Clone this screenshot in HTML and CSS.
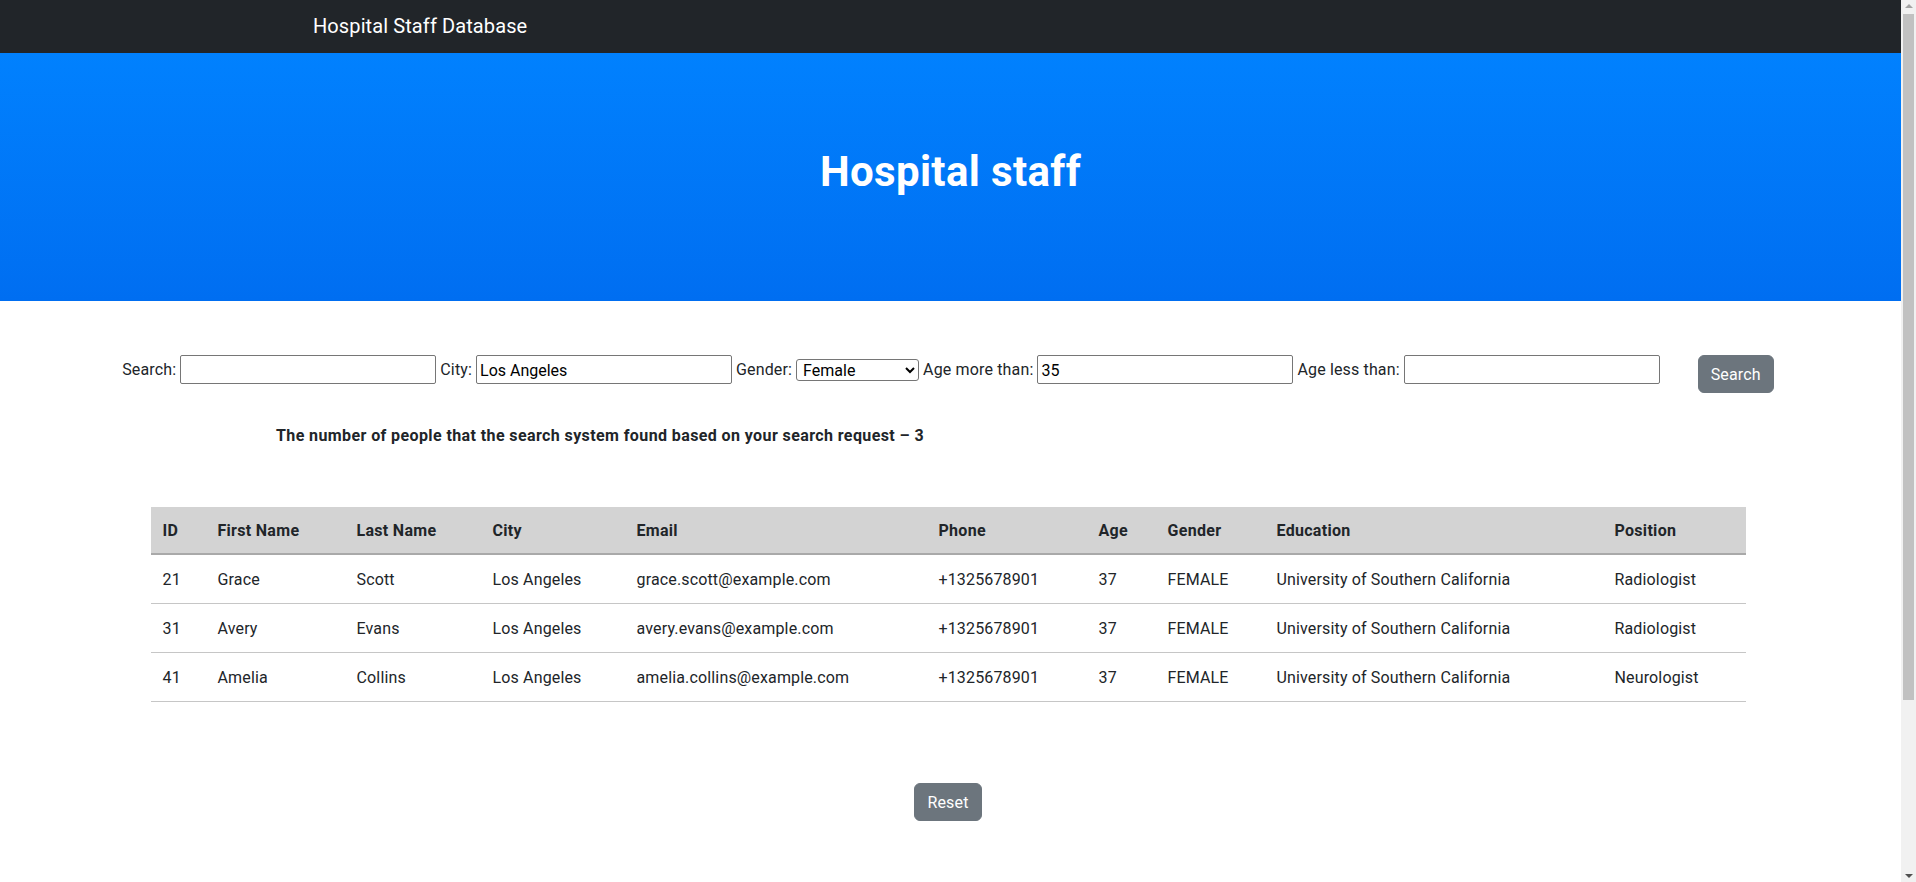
FILE: index.html
```html
<!DOCTYPE html>
<html lang="en">
<head>
<meta charset="utf-8">
<title>Hospital Staff Database</title>
<link rel="stylesheet" href="styles.css">
</head>
<body>
<div class="page">
  <nav class="navbar">
    <div class="nav-container">
      <span class="brand">Hospital Staff Database</span>
    </div>
  </nav>
  <header class="hero">
    <h1 class="hero-title">Hospital staff</h1>
  </header>
  <main class="content">
    <form class="search-form">
      <div class="fields">
        <label class="field-label" for="q">Search:</label>
        <input class="field-input" id="q" type="text" value="">
        <label class="field-label" for="city">City:</label>
        <input class="field-input" id="city" type="text" value="Los Angeles">
        <label class="field-label" for="gender">Gender:</label>
        <select class="field-select" id="gender">
          <option>Female</option>
          <option>Male</option>
        </select>
        <label class="field-label" for="agemin">Age more than:</label>
        <input class="field-input" id="agemin" type="text" value="35">
        <label class="field-label" for="agemax">Age less than:</label>
        <input class="field-input" id="agemax" type="text" value="">
      </div>
      <button class="btn" type="button">Search</button>
    </form>
    <p class="found">The number of people that the search system found based on your search request – 3</p>
    <table class="staff-table">
      <thead>
        <tr>
          <th class="c-id">ID</th>
          <th class="c-first">First Name</th>
          <th class="c-last">Last Name</th>
          <th class="c-city">City</th>
          <th class="c-email">Email</th>
          <th class="c-phone">Phone</th>
          <th class="c-age">Age</th>
          <th class="c-gender">Gender</th>
          <th class="c-edu">Education</th>
          <th class="c-pos">Position</th>
        </tr>
      </thead>
      <tbody>
        <tr>
          <td>21</td><td>Grace</td><td>Scott</td><td>Los Angeles</td><td>grace.scott@example.com</td><td>+1325678901</td><td>37</td><td>FEMALE</td><td>University of Southern California</td><td>Radiologist</td>
        </tr>
        <tr>
          <td>31</td><td>Avery</td><td>Evans</td><td>Los Angeles</td><td>avery.evans@example.com</td><td>+1325678901</td><td>37</td><td>FEMALE</td><td>University of Southern California</td><td>Radiologist</td>
        </tr>
        <tr>
          <td>41</td><td>Amelia</td><td>Collins</td><td>Los Angeles</td><td>amelia.collins@example.com</td><td>+1325678901</td><td>37</td><td>FEMALE</td><td>University of Southern California</td><td>Neurologist</td>
        </tr>
      </tbody>
    </table>
    <div class="reset-row">
      <button class="btn" type="button">Reset</button>
    </div>
  </main>
</div>
<div class="scrollbar" aria-hidden="true">
  <span class="sb-arrow sb-up"></span>
  <span class="sb-thumb"></span>
  <span class="sb-arrow sb-down"></span>
</div>
</body>
</html>
```

FILE: styles.css
```css
* {
  box-sizing: border-box;
}

html, body {
  margin: 0;
  padding: 0;
}

body {
  font-family: Roboto, "Liberation Sans", sans-serif;
  font-size: 16px;
  line-height: 1.5;
  color: #212529;
  background: #fff;
  letter-spacing: 0.15px;
  padding-right: 15px;
}

.page {
  width: 100%;
}

.navbar {
  background: #212529;
  height: 53px;
  display: flex;
  align-items: center;
}

.nav-container {
  width: 1275px;
  margin: 0 auto;
}

.brand {
  color: #fff;
  font-size: 20px;
  line-height: 30px;
  display: inline-block;
  padding-bottom: 2px;
  letter-spacing: 0.1px;
}

.hero {
  height: 248px;
  background: linear-gradient(to bottom, #0181fe, #006ef1);
  display: flex;
  align-items: center;
  justify-content: center;
  padding-bottom: 9px;
}

.hero-title {
  margin: 0;
  color: #fff;
  font-size: 42px;
  font-weight: 700;
  line-height: 1.2;
  letter-spacing: 0.35px;
}

.content {
  padding-top: 54px;
  padding-bottom: 276px;
  padding-right: 5px;
}

.search-form {
  display: flex;
  justify-content: center;
  align-items: flex-start;
  margin: 0;
}

.fields {
  display: flex;
  align-items: center;
  gap: 4px;
  height: 29px;
}

.field-label {
  white-space: nowrap;
  padding-top: 1px;
}

.field-input {
  width: 256px;
  height: 29px;
  border: 1px solid #767676;
  border-radius: 2px;
  padding: 2px 3px 0;
  font-family: Roboto, "Liberation Sans", sans-serif;
  font-size: 16px;
  color: #000;
  background: #fff;
}

.field-select {
  width: 123px;
  height: 22px;
  border: 1px solid #767676;
  border-radius: 3px;
  font-family: Roboto, "Liberation Sans", sans-serif;
  font-size: 16px;
  color: #000;
  background: #fff;
  padding: 0 2px;
}

.btn {
  background: #6c757d;
  color: #fff;
  border: 1px solid #6c757d;
  border-radius: 6px;
  padding: 7px 12px 5px;
  font-family: Roboto, "Liberation Sans", sans-serif;
  font-size: 16px;
  line-height: 24px;
  letter-spacing: 0.15px;
  cursor: pointer;
}

.search-form .btn {
  margin-left: 38px;
}

.found {
  margin: 30px 0 0;
  padding-left: 276px;
  padding-top: 1px;
  font-weight: 700;
  letter-spacing: 0.4px;
}

.staff-table {
  width: 1595px;
  margin: 59px auto 0;
  border-collapse: collapse;
  table-layout: fixed;
}

.staff-table th,
.staff-table td {
  padding: 13px 12px 11px;
  text-align: left;
  vertical-align: top;
  white-space: nowrap;
}

.staff-table thead th {
  background: #d3d3d3;
  font-weight: 700;
  letter-spacing: 0.3px;
  border-bottom: 2px solid #a9a9a9;
  padding-top: 12px;
  padding-bottom: 10px;
}

.staff-table td {
  border-bottom: 1px solid #c6c6c6;
}

.c-id { width: 55px; }
.c-first { width: 139px; }
.c-last { width: 136px; }
.c-city { width: 144px; }
.c-email { width: 302px; }
.c-phone { width: 160px; }
.c-age { width: 69px; }
.c-gender { width: 109px; }
.c-edu { width: 338px; }
.c-pos { width: 143px; }

.reset-row {
  display: flex;
  justify-content: center;
  margin-top: 81px;
}

/* fake classic scrollbar drawn over the right edge of the window */
.scrollbar {
  position: fixed;
  top: 0;
  right: 0;
  width: 15px;
  height: 100vh;
  background: #f1f1f1;
}

.sb-thumb {
  position: absolute;
  top: 14px;
  left: 2px;
  width: 11px;
  height: 686px;
  background: #c1c1c1;
}

.sb-arrow {
  position: absolute;
  left: 4px;
  width: 0;
  height: 0;
  border-left: 4px solid transparent;
  border-right: 4px solid transparent;
}

.sb-up {
  top: 4px;
  border-bottom: 4px solid #a3a3a3;
}

.sb-down {
  bottom: 4px;
  border-top: 4px solid #505050;
}
```
